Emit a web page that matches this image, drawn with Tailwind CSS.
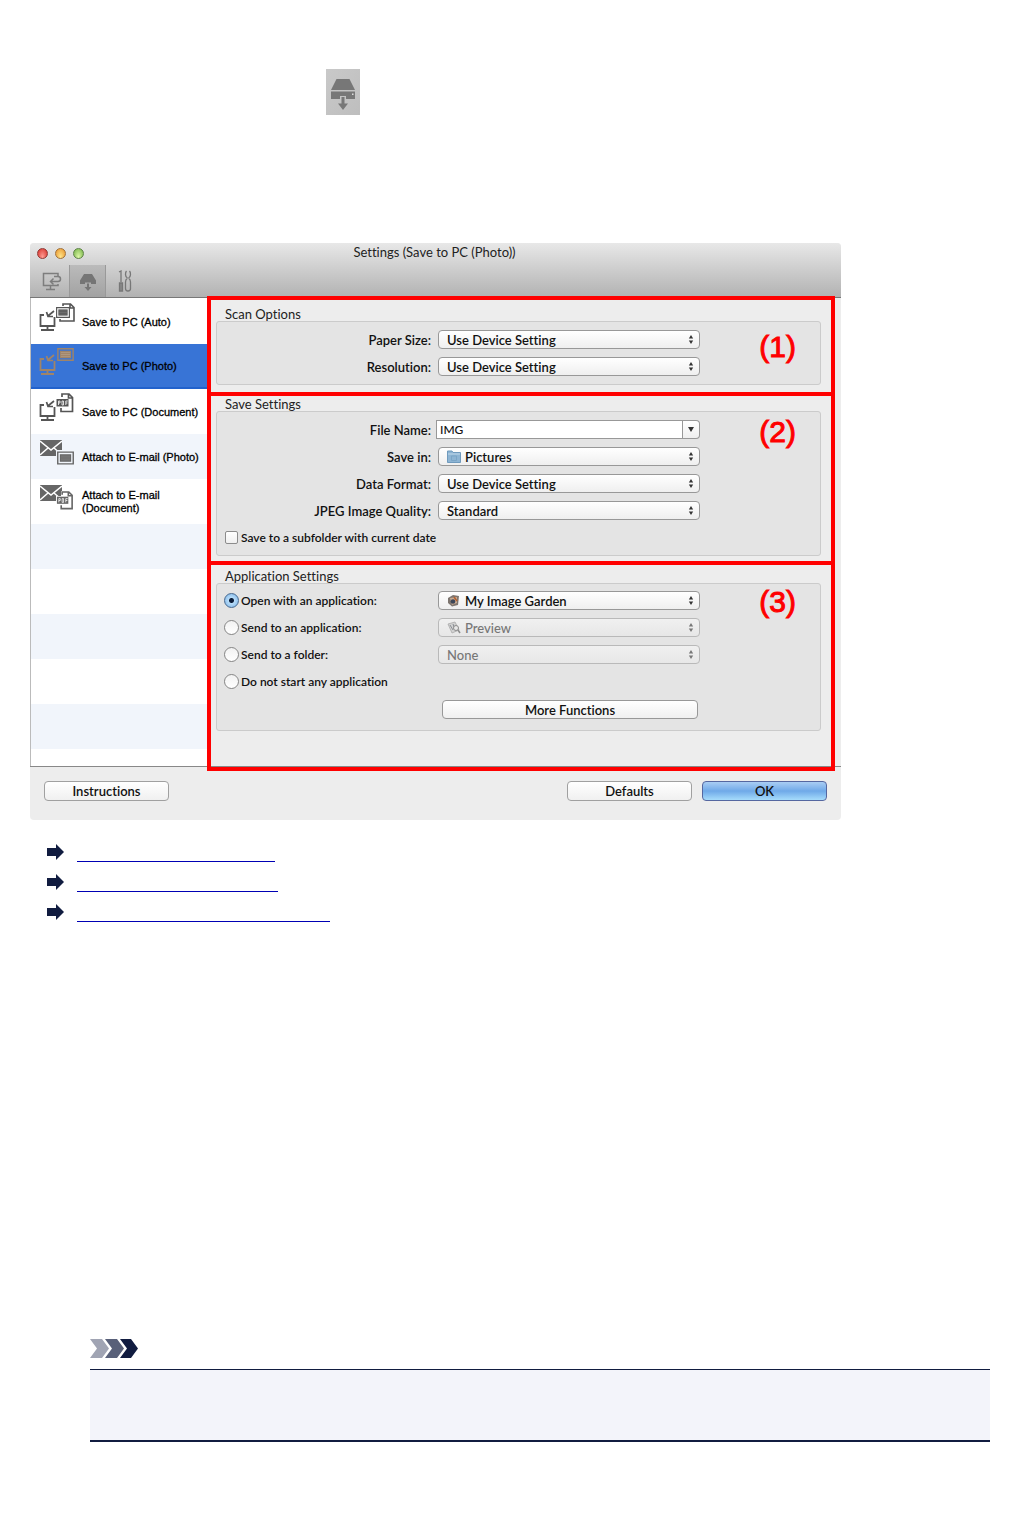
<!DOCTYPE html>
<html lang="en">

<head>
    <meta charset="UTF-8" />
    <meta name="viewport" content="width=device-width, initial-scale=1" />
    <title>Settings (Save to PC (Photo))</title>
    <script src="https://cdn.jsdelivr.net/npm/@tailwindcss/browser@4"></script>
</head>

<body class="bg-white text-[#111] font-['Lato','Open_Sans',sans-serif] text-[13px] font-semibold [font-variant-ligatures:none] pt-[69px] pb-[72px]">
    <!-- shared symbols -->
    <svg class="hidden">
        <symbol id="updown" viewBox="0 0 6 10">
            <path d="M3 0L5.400 4H.6zM3 10L.6 6h4.800z" fill="currentColor" />
        </symbol>
        <symbol id="pc" viewBox="0 0 36 30">
            <path d="M5 12H1.500v11h14V14M8.500 23v3M2 27h13" fill="none" stroke="currentColor" stroke-width="1.800" />
            <path d="M15 8l-5.500 4.500M7.500 9l1.500 4.500H14" fill="none" stroke="currentColor" stroke-width="1.700" />
        </symbol>
        <symbol id="photo" viewBox="0 0 18 14">
            <path d="M.8.8h16.400v12.400H.8z" fill="none" stroke="currentColor" stroke-width="1.500" />
            <path d="M3 3h12v8H3z" fill="currentColor" />
            <path d="M4 5h10M4 7h10M4 9h10" stroke="#fff" stroke-opacity=".3" stroke-width=".6" />
        </symbol>
        <symbol id="doc" viewBox="0 0 18 20">
            <path d="M6 4V1h7l3.500 3.500V18.500H5V15M12.500 1v4h4" fill="none" stroke="currentColor" stroke-width="1.700" />
            <path d="M.5 6h12v7.500H.5z" fill="currentColor" />
            <path d="M2.500 12V8h1.500v2H2.500M6 8v4h1.500V8zM9.800 12V8h2M10 10h1.500" fill="none" stroke="#fff" stroke-width=".8" />
        </symbol>
        <symbol id="mail" viewBox="0 0 22 16">
            <path d="M0 0h22v16H0z" fill="currentColor" />
            <path d="M0 1l11 9L22 1M0 15l8-7M22 15l-8-7" fill="none" stroke="#fff" stroke-width="1.500" />
        </symbol>
        <symbol id="arrow" viewBox="0 0 17 16">
            <path d="M0 4h9V0l8 8-8 8v-4H0z" fill="#111c40" />
        </symbol>
    </svg>

    <div class="ml-[326px] w-[34px] h-[46px] bg-linear-to-br from-[#c9c9c9] to-[#bebebe] flex items-center justify-center">
        <svg class="w-[26px] h-[32px] mt-1" viewBox="0 0 26 32" fill="#777">
            <path d="M6.500 1h13L25 12H1z" />
            <path d="M1 13.500h24V21h-9v-3h-6v3H1z" />
            <path d="M11.500 19h3v6.500H18L13 32l-5-6.500h3.500z" />
            <path d="M22 15.500h1.500V17H22z" fill="#ddd" />
        </svg>
    </div>

    <main class="mt-[128px] ml-[30px] w-[811px] max-w-full rounded-[4px] overflow-hidden bg-[#ededed]">
        <header class="h-[55px] bg-linear-to-b from-[#e8e8e8] to-[#b2b2b2] border-b border-[#777]">
            <div class="h-5 flex items-center">
                <div class="w-[70px] pl-[7px] flex gap-[6px]">
                    <button aria-label="Close" class="size-[11px] mr-px rounded-full border border-[#8f3a36] bg-radial-[at_50%_85%] from-[#ff9d94] to-[#d52b25]"></button>
                    <button aria-label="Minimize" class="size-[11px] mr-px rounded-full border border-[#a0713a] bg-radial-[at_50%_85%] from-[#ffe58a] to-[#e8922a]"></button>
                    <button aria-label="Zoom" class="size-[11px] rounded-full border border-[#5e8248] bg-radial-[at_50%_85%] from-[#dcf7a5] to-[#71b044]"></button>
                </div>
                <h1 class="flex-1 text-center pr-[72px] font-normal text-[#222]">Settings (Save to PC (Photo))</h1>
            </div>
            <nav class="h-[34px] pt-[2px] ml-[5px] flex text-[#7d7d7d]">
                <button aria-label="Scanning from a computer" class="w-[34px] flex items-center justify-center">
                    <svg class="w-5 h-[19px]" viewBox="0 0 20 19" fill="none" stroke="currentColor" stroke-width="1.500">
                        <path d="M16 4V1.500H1.500v12H16V12M8.500 14v3M4 17.500h9" />
                        <path d="M12 4.500h4a2.500 2.500 0 0 1 0 5H9M11.500 6.500L8.500 9.500l3 3" />
                    </svg>
                </button>
                <button aria-label="Scanning from the operation panel" class="w-[37px] flex items-center justify-center bg-linear-to-b from-[#bbb] to-[#a2a2a2] border-x border-[#999]">
                    <svg class="w-4 h-[19px]" viewBox="0 0 16 19" fill="#757575">
                        <path d="M4 2h8l4 6.500V12h-5v-1.500H5V12H0V8.500z" />
                        <path d="M7 11.500h2V15h2.500L8 19l-3.500-4H7z" />
                    </svg>
                </button>
                <button aria-label="General settings" class="w-[37px] flex items-center justify-center">
                    <svg class="w-[14px] h-[22px]" viewBox="0 0 14 22" fill="none" stroke="#777" stroke-width="1.300">
                        <path d="M1 2l2-1v11M1.500 13h3v8h-3zM3 13v8" />
                        <path d="M8.500 1Q7.500 2 7.500 4.500T9.500 8M11.500 1q1 1 1 3.500T10.500 8M9.500 8Q7.500 9.500 7.500 12v6.500Q7.500 21 10 21t2.500-2.500V12q0-2.500-2-4" />
                    </svg>
                </button>
            </nav>
        </header>

        <div class="flex h-[469px] border-b border-[#888]">
            <aside class="w-[177px] shrink-0 overflow-hidden border-l border-[#bbb] bg-white pt-px font-['Liberation_Sans',Arial,sans-serif] text-[11px] leading-[13px] font-normal [-webkit-text-stroke:0.3px]">
                <ul class="text-[#555]">
                    <li><a href="#auto" class="h-[45px] flex items-center pl-2 gap-[7px]">
                            <svg class="w-9 h-[30px] mb-2" viewBox="0 0 36 30">
                                <use href="#pc" width="36" height="30" />
                                <path d="M24 3V1h7.500L35 4.500V18H21v-2M31 1v4h4" fill="none" stroke="currentColor" stroke-width="1.600" />
                                <use href="#photo" x="17" y="4" width="14" height="11" />
                            </svg>
                            <span class="text-black pt-px">Save to PC (Auto)</span></a></li>
                    <li><a href="#photo-pc" class="h-[45px] flex items-center pl-2 gap-[7px] bg-[#3874d6] border-b-2 border-[#2262cc] text-[#a08468]">
                            <svg class="w-9 h-[30px] mb-2" viewBox="0 0 36 30">
                                <use href="#pc" width="36" height="30" />
                                <use href="#photo" x="18" y="1" width="17" height="13" />
                            </svg>
                            <span class="text-black pt-px">Save to PC (Photo)</span></a></li>
                    <li><a href="#doc-pc" class="h-[45px] flex items-center pl-2 gap-[7px]">
                            <svg class="w-9 h-[30px] mb-2" viewBox="0 0 36 30">
                                <use href="#pc" width="36" height="30" />
                                <use href="#doc" x="17" y="0" width="18" height="20" />
                            </svg>
                            <span class="text-black pt-px">Save to PC (Document)</span></a></li>
                    <li><a href="#mail-photo" class="h-[45px] flex items-center pl-2 gap-[7px] bg-[#f1f5fb] text-[#666]">
                            <svg class="w-9 h-[30px] mb-2" viewBox="0 0 36 30">
                                <use href="#mail" x="1" y="2" width="22" height="16" />
                                <path d="M17 12h19v16H17z" fill="#f1f5fb" />
                                <use href="#photo" x="18" y="13" width="17" height="14" />
                            </svg>
                            <span class="text-black pt-px">Attach to E-mail (Photo)</span></a></li>
                    <li><a href="#mail-doc" class="h-[45px] flex items-center pl-2 gap-[7px] text-[#666]">
                            <svg class="w-9 h-[30px] mb-2" viewBox="0 0 36 30">
                                <use href="#mail" x="1" y="2" width="22" height="16" />
                                <path d="M17 13h5V8h14v20H17z" fill="#fff" />
                                <use href="#doc" x="17" y="8" width="18" height="19" />
                            </svg>
                            <span class="text-black pt-px">Attach to E-mail<br>(Document)</span></a></li>
                    <li class="h-[45px] bg-[#f1f5fb]"></li>
                    <li class="h-[45px]"></li>
                    <li class="h-[45px] bg-[#f1f5fb]"></li>
                    <li class="h-[45px]"></li>
                    <li class="h-[45px] bg-[#f1f5fb]"></li>
                </ul>
            </aside>

            <form id="settings" class="flex-1 mr-[6px] -mt-[2px] relative z-10 leading-[14px]">
                <section class="border-4 border-[#f00] pt-[7px] pl-[5px] pr-[10px] pb-[7px]">
                    <h2 class="pl-[9px] font-normal text-[#222]">Scan Options</h2>
                    <div class="relative border border-[#cbcbcb] rounded-[3px] bg-[#e4e4e4] py-1">
                        <div class="h-[27px] flex items-center gap-[7px]">
                            <label for="paper" class="w-[214px] text-right">Paper Size:</label>
                            <div class="relative w-[262px]">
                                <select id="paper" class="block w-full h-[19px] appearance-none rounded-[4px] border border-[#989898] bg-linear-to-b from-white to-[#efefef] pl-2"><option>Use Device Setting</option></select>
                                <svg class="absolute right-[6px] top-[5px] w-[6px] h-[9px] text-[#333] pointer-events-none"><use href="#updown" /></svg>
                            </div>
                        </div>
                        <div class="h-[27px] flex items-center gap-[7px]">
                            <label for="resolution" class="w-[214px] text-right">Resolution:</label>
                            <div class="relative w-[262px]">
                                <select id="resolution" class="block w-full h-[19px] appearance-none rounded-[4px] border border-[#989898] bg-linear-to-b from-white to-[#efefef] pl-2"><option>Use Device Setting</option></select>
                                <svg class="absolute right-[6px] top-[5px] w-[6px] h-[9px] text-[#333] pointer-events-none"><use href="#updown" /></svg>
                            </div>
                        </div>
                        <span class="absolute right-6 top-[9px] font-['Liberation_Sans',Arial,sans-serif] text-[30px] leading-8 font-normal text-[#f00] [-webkit-text-stroke:1px]">(1)</span>
                    </div>
                </section>

                <section class="-mt-1 border-4 border-[#f00] pt-px pl-[5px] pr-[10px] pb-[5px]">
                    <h2 class="pl-[9px] font-normal text-[#222]">Save Settings</h2>
                    <div class="relative border border-[#cbcbcb] rounded-[3px] bg-[#e4e4e4] py-1">
                        <div class="h-[27px] flex items-center gap-[5px]">
                            <label for="filename" class="w-[214px] text-right">File Name:</label>
                            <div class="w-[264px] h-[19px] flex">
                                <input id="filename" type="text" value="IMG" class="flex-1 min-w-0 border border-[#989898] bg-white px-[3px] text-[12px] font-medium" />
                                <button type="button" aria-label="File name history" class="w-[17px] flex items-center justify-center rounded-r-[4px] border border-l-0 border-[#989898] bg-linear-to-b from-white to-[#efefef]">
                                    <svg class="w-[6px] h-[5px]" viewBox="0 0 6 5"><path d="M0 0h6L3 5z" fill="#333" /></svg>
                                </button>
                            </div>
                        </div>
                        <div class="h-[27px] flex items-center gap-[7px]">
                            <label for="savein" class="w-[214px] text-right">Save in:</label>
                            <div class="relative w-[262px]">
                                <select id="savein" class="block w-full h-[19px] appearance-none rounded-[4px] border border-[#989898] bg-linear-to-b from-white to-[#efefef] pl-[26px]"><option>Pictures</option></select>
                                <svg class="absolute left-[9px] top-[3px] w-[14px] h-[13px] pointer-events-none" viewBox="0 0 14 13">
                                    <path d="M.5 12.500V1h4.500l1 1.500h7.500v10z" fill="#8db4d3" stroke="#6f9abd" />
                                    <path d="M1 4h12" stroke="#c0d9eb" />
                                    <path d="M4.500 6h5v4.500h-5z" fill="none" stroke="#7aa5c6" />
                                </svg>
                                <svg class="absolute right-[6px] top-[5px] w-[6px] h-[9px] text-[#333] pointer-events-none"><use href="#updown" /></svg>
                            </div>
                        </div>
                        <div class="h-[27px] flex items-center gap-[7px]">
                            <label for="format" class="w-[214px] text-right">Data Format:</label>
                            <div class="relative w-[262px]">
                                <select id="format" class="block w-full h-[19px] appearance-none rounded-[4px] border border-[#989898] bg-linear-to-b from-white to-[#efefef] pl-2"><option>Use Device Setting</option></select>
                                <svg class="absolute right-[6px] top-[5px] w-[6px] h-[9px] text-[#333] pointer-events-none"><use href="#updown" /></svg>
                            </div>
                        </div>
                        <div class="h-[27px] flex items-center gap-[7px]">
                            <label for="quality" class="w-[214px] text-right">JPEG Image Quality:</label>
                            <div class="relative w-[262px]">
                                <select id="quality" class="block w-full h-[19px] appearance-none rounded-[4px] border border-[#989898] bg-linear-to-b from-white to-[#efefef] pl-2"><option>Standard</option></select>
                                <svg class="absolute right-[6px] top-[5px] w-[6px] h-[9px] text-[#333] pointer-events-none"><use href="#updown" /></svg>
                            </div>
                        </div>
                        <div class="h-[27px] flex items-center gap-[3px] pl-2">
                            <input id="subfolder" type="checkbox" class="appearance-none size-[13px] rounded-[2px] border border-[#8c8c8c] bg-linear-to-b from-white to-[#f0f0f0]" />
                            <label for="subfolder" class="text-[12px]">Save to a subfolder with current date</label>
                        </div>
                        <span class="absolute right-6 top-1 font-['Liberation_Sans',Arial,sans-serif] text-[30px] leading-8 font-normal text-[#f00] [-webkit-text-stroke:1px]">(2)</span>
                    </div>
                </section>

                <section class="-mt-1 border-4 border-[#f00] pt-1 pl-[5px] pr-[10px] pb-9">
                    <h2 class="pl-[9px] font-normal text-[#222]">Application Settings</h2>
                    <div class="relative border border-[#cbcbcb] rounded-[3px] bg-[#e4e4e4] pt-[3px] pb-[6px]">
                        <div class="h-[27px] flex items-center pl-[7px]">
                            <input id="open" name="after" type="radio" checked class="appearance-none size-[15px] rounded-full border border-[#47698f] bg-[radial-gradient(circle,#0b1c38_2px,#b7dcf8_3px,#8fc0ec_7px)]" />
                            <label for="open" class="w-[199px] pl-[2px] text-[12px]">Open with an application:</label>
                            <div class="relative w-[262px]">
                                <select aria-label="Application to open" class="block w-full h-[19px] appearance-none rounded-[4px] border border-[#989898] bg-linear-to-b from-white to-[#efefef] pl-[26px]"><option>My Image Garden</option></select>
                                <svg class="absolute left-[9px] top-[3px] w-[13px] h-[13px] pointer-events-none" viewBox="0 0 13 13">
                                    <path d="M1 4l5-3 6 1-1 9-6 1.500L1 9z" fill="#7d756f" />
                                    <path d="M3 4l7-1v6l-5 2z" fill="#c9ab92" />
                                    <circle cx="6" cy="7.500" r="2.300" fill="#3c4658" />
                                    <path d="M7 3l3 4" stroke="#b5602f" stroke-width="1.500" />
                                </svg>
                                <svg class="absolute right-[6px] top-[5px] w-[6px] h-[9px] text-[#333] pointer-events-none"><use href="#updown" /></svg>
                            </div>
                        </div>
                        <div class="h-[27px] flex items-center pl-[7px]">
                            <input id="sendapp" name="after" type="radio" class="appearance-none size-[15px] rounded-full border border-[#858585] bg-linear-to-b from-[#f2f2f2] to-white" />
                            <label for="sendapp" class="w-[199px] pl-[2px] text-[12px]">Send to an application:</label>
                            <div class="relative w-[262px] text-[#777]">
                                <select disabled aria-label="Application to send to" class="block w-full h-[19px] appearance-none rounded-[4px] border border-[#b9b9b9] bg-linear-to-b from-[#f0f0f0] to-[#e7e7e7] pl-[26px] font-medium"><option>Preview</option></select>
                                <svg class="absolute left-[9px] top-[3px] w-[14px] h-[13px] pointer-events-none" viewBox="0 0 14 13">
                                    <path d="M1 3l7-2 4 8-7 3z" fill="#d2d2d2" stroke="#aaa" stroke-width=".8" />
                                    <path d="M3 4l3 5M6 3l1 3" stroke="#8a8f96" />
                                    <circle cx="9" cy="7" r="2.500" fill="#e8e8e8" stroke="#8c8c8c" />
                                    <path d="M11 9l2 3" stroke="#8c8c8c" stroke-width="1.500" />
                                </svg>
                                <svg class="absolute right-[6px] top-[5px] w-[6px] h-[9px] pointer-events-none"><use href="#updown" /></svg>
                            </div>
                        </div>
                        <div class="h-[27px] flex items-center pl-[7px]">
                            <input id="sendfolder" name="after" type="radio" class="appearance-none size-[15px] rounded-full border border-[#858585] bg-linear-to-b from-[#f2f2f2] to-white" />
                            <label for="sendfolder" class="w-[199px] pl-[2px] text-[12px]">Send to a folder:</label>
                            <div class="relative w-[262px] text-[#777]">
                                <select disabled aria-label="Folder to send to" class="block w-full h-[19px] appearance-none rounded-[4px] border border-[#b9b9b9] bg-linear-to-b from-[#f0f0f0] to-[#e7e7e7] pl-2 font-medium"><option>None</option></select>
                                <svg class="absolute right-[6px] top-[5px] w-[6px] h-[9px] pointer-events-none"><use href="#updown" /></svg>
                            </div>
                        </div>
                        <div class="h-[27px] flex items-center pl-[7px]">
                            <input id="nostart" name="after" type="radio" class="appearance-none size-[15px] rounded-full border border-[#858585] bg-linear-to-b from-[#f2f2f2] to-white" />
                            <label for="nostart" class="pl-[2px] text-[12px]">Do not start any application</label>
                        </div>
                        <div class="h-[29px] flex items-center pl-[225px]">
                            <button type="button" class="w-[256px] h-[19px] rounded-[4px] border border-[#989898] bg-linear-to-b from-white to-[#f0f0f0]">More Functions</button>
                        </div>
                        <span class="absolute right-6 top-[2px] font-['Liberation_Sans',Arial,sans-serif] text-[30px] leading-8 font-normal text-[#f00] [-webkit-text-stroke:1px]">(3)</span>
                    </div>
                </section>
            </form>
        </div>

        <footer class="h-[53px] flex pt-[14px] px-[14px] gap-[10px]">
            <button class="w-[125px] h-5 mr-auto rounded-[4px] border border-[#a0a0a0] bg-linear-to-b from-white to-[#f0f0f0]">Instructions</button>
            <button class="w-[125px] h-5 rounded-[4px] border border-[#a0a0a0] bg-linear-to-b from-white to-[#f0f0f0]">Defaults</button>
            <button form="settings" class="w-[125px] h-5 rounded-[4px] border border-[#5567a0] bg-linear-to-b from-[#a9cdf3] via-[#6fa9e8] to-[#a6dcfb]">OK</button>
        </footer>
    </main>

    <ul class="mt-[17px] ml-[47px]">
        <li class="h-[30px] flex items-start">
            <svg class="w-[17px] h-4 mt-[7px]"><use href="#arrow" /></svg>
            <a href="#scan-options" aria-label="(1) Scan Options Area" class="ml-[13px] w-[198px] h-[25px] border-b border-[#0000b4]"></a>
        </li>
        <li class="h-[30px] flex items-start">
            <svg class="w-[17px] h-4 mt-[7px]"><use href="#arrow" /></svg>
            <a href="#save-settings" aria-label="(2) Save Settings Area" class="ml-[13px] w-[201px] h-[25px] border-b border-[#0000b4]"></a>
        </li>
        <li class="h-[30px] flex items-start">
            <svg class="w-[17px] h-4 mt-[7px]"><use href="#arrow" /></svg>
            <a href="#application-settings" aria-label="(3) Application Settings Area" class="ml-[13px] w-[253px] h-[25px] border-b border-[#0000b4]"></a>
        </li>
    </ul>

    <div class="mt-[412px] ml-[90px] mr-[31px]">
        <svg class="w-12 h-[19px]" viewBox="0 0 48 19">
            <path d="M0 0h12l7 9.500L12 19H0l7-9.500z" fill="#a0a4b3" />
            <path d="M15 0h12l7 9.500L27 19H15l7-9.500z" fill="#586079" />
            <path d="M30 0h11l7 9.500L41 19H30l7-9.500z" fill="#111c40" />
        </svg>
        <div class="mt-[11px] h-[73px] border-t border-b-2 border-[#111c40] bg-[#f3f4fa]"></div>
    </div>
</body>

</html>
